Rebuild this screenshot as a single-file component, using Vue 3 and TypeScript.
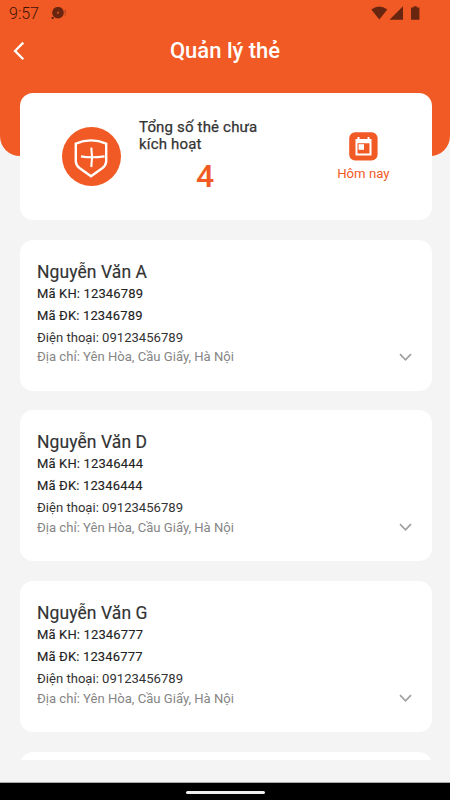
<script setup lang="ts">
interface Customer {
  name: string
  code: string
  phone: string
  address: string
}

const address = 'Yên Hòa, Cầu Giấy, Hà Nội'
const customers: Customer[] = [
  { name: 'Nguyễn Văn A', code: '12346789', phone: '09123456789', address },
  { name: 'Nguyễn Văn D', code: '12346444', phone: '09123456789', address },
  { name: 'Nguyễn Văn G', code: '12346777', phone: '09123456789', address },
]
</script>

<template>
  <div class="screen">
    <header class="header">
      <div class="status">
        <span class="time">9:57</span>
        <svg class="notice" width="16" height="14" viewBox="0 0 16 14">
          <circle cx="7" cy="5.7" r="5.8" fill="#682510" />
          <circle cx="7" cy="5.7" r="1.3" fill="#b9451c" />
          <circle cx="1.7" cy="10.9" r="1.2" fill="#682510" />
          <path d="M14.2 3v3.4M14.2 7.4v1.2" stroke="#a8431f" stroke-width="1.2" />
        </svg>
        <svg class="signals" width="50" height="16" viewBox="0 0 50 16">
          <path d="M1.3 3.4Q9.3 -2.6 17.3 3.4L9.3 13.6Z" fill="#682510" />
          <path d="M33 .3V13.8H19.5Z" fill="#682510" />
          <path d="M41 1.6h2.6V.2h3.2v1.4h2.6v12.2H41Z" fill="#682510" />
        </svg>
      </div>
      <div class="title-bar">
        <button class="back" aria-label="Quay lại">
          <svg width="14" height="20" viewBox="0 0 14 20">
            <path d="M11.3 1.6 3 9.9l8.3 8.3" fill="none" stroke="#fff" stroke-width="2.2" />
          </svg>
        </button>
        <h1>Quản lý thẻ</h1>
      </div>
    </header>

    <main class="content">
      <section class="summary">
        <div class="badge">
          <svg width="34" height="40" viewBox="0 0 34 40" fill="none" stroke="#fff">
            <path d="M1.8 4.6Q17 -1.8 32.2 4.6V22.6Q31.8 26.5 28.5 29L17 37.2 5.5 29Q2.2 26.5 1.8 22.6Z" stroke-width="2.4" />
            <path d="M17.3 8.6Q18.8 18 17.3 28M7 17.4Q17 19.2 30.6 17.4" stroke-width="2.1" />
          </svg>
        </div>
        <div class="total">
          <p>Tổng số thẻ chưa<br />kích hoạt</p>
          <strong>4</strong>
        </div>
        <div class="today">
          <svg width="29" height="29" viewBox="0 0 29 29">
            <rect x=".2" y=".2" width="28.4" height="28.2" rx="6" fill="#f15a24" />
            <path d="M6.5 7h2V5h2v2h8V5h2v2h2v16.5h-16ZM8.5 11.3V21.5h12V11.3Z" fill="#fff" fill-rule="evenodd" />
            <rect x="9.6" y="12.2" width="5.4" height="5.6" fill="#fff" />
          </svg>
          <span>Hôm nay</span>
        </div>
      </section>

      <div class="list">
        <article v-for="customer in customers" :key="customer.code" class="card">
          <h2>{{ customer.name }}</h2>
          <p class="code">Mã KH: {{ customer.code }}</p>
          <p class="code">Mã ĐK: {{ customer.code }}</p>
          <p class="phone">Điện thoại: {{ customer.phone }}</p>
          <div class="address">
            <span>Địa chỉ: {{ customer.address }}</span>
            <svg width="13" height="9" viewBox="0 0 13 9">
              <path d="M1 1.2 6.5 6.8 12 1.2" fill="none" stroke="#a0a0a0" stroke-width="1.7" />
            </svg>
          </div>
        </article>
        <article class="card"></article>
      </div>
    </main>

    <footer class="nav"><span></span></footer>
  </div>
</template>

<style>
body {
  margin: 0;
  overflow: hidden;
}
</style>

<style scoped>
.screen {
  width: 450px;
  height: 800px;
  display: flex;
  flex-direction: column;
  overflow: hidden;
  background: #f4f4f4;
  color: #333;
  font-family: Roboto, "Noto Sans", sans-serif;
}

h1,
h2,
p {
  margin: 0;
}

.header {
  flex: 0 0 156px;
  box-sizing: border-box;
  background: #f15a24;
  border-radius: 0 0 20px 20px;
}

.status {
  height: 28px;
  box-sizing: border-box;
  padding: 6px 30px 0 9px;
  display: flex;
  align-items: flex-start;
}

.time {
  width: 42px;
  font-size: 16px;
  line-height: 16px;
  font-weight: 300;
  color: #3d1308;
}

.notice {
  margin-top: 1px;
}

.signals {
  margin-left: auto;
}

.title-bar {
  height: 46px;
  padding: 0 12px;
  display: grid;
  grid-template-columns: 20px 1fr 20px;
  align-items: center;
}

.back {
  display: flex;
  padding: 0;
  border: 0;
  background: none;
}

h1 {
  color: #fff;
  font-size: 22px;
  line-height: 28px;
  font-weight: 500;
  text-align: center;
}

.content {
  height: 667px;
  flex: none;
  margin-top: -63px;
  padding: 0 18.5px 0 19.5px;
  overflow: hidden;
}

.summary {
  height: 127px;
  box-sizing: border-box;
  padding: 0 42px;
  display: flex;
  background: #fff;
  border-radius: 13px;
}

.badge {
  width: 59px;
  height: 59px;
  margin-top: 34px;
  display: flex;
  align-items: center;
  justify-content: center;
  background: #f15a24;
  border-radius: 50%;
}

.badge svg {
  margin-top: 4px;
}

.total {
  width: 132px;
  margin: 26px 0 0 18.5px;
}

.total p {
  font-size: 15px;
  line-height: 17px;
  letter-spacing: 0.17px;
  -webkit-text-stroke: 0.25px currentColor;
  white-space: nowrap;
}

.total strong {
  display: block;
  margin-top: 4px;
  font-size: 32px;
  line-height: 38px;
  font-weight: 500;
  text-align: center;
  color: #f15a24;
}

.today {
  margin: 39px 0 0 auto;
  display: flex;
  flex-direction: column;
  align-items: center;
  color: #f15a24;
  font-size: 13.2px;
  line-height: 18px;
}

.today span {
  margin-top: 4px;
}

.list {
  margin-top: 19.5px;
  display: flex;
  flex-direction: column;
  gap: 19.7px;
}

.card {
  height: 151px;
  flex: none;
  box-sizing: border-box;
  padding: 21px 20px 0 17.5px;
  background: #fff;
  border-radius: 13px;
}

h2 {
  font-size: 17.5px;
  line-height: 22px;
  font-weight: 400;
  letter-spacing: 0.08px;
  -webkit-text-stroke: 0.15px currentColor;
}

.code {
  font-size: 13px;
  line-height: 22px;
  letter-spacing: 0.15px;
  -webkit-text-stroke: 0.12px currentColor;
  color: #222;
}

.phone {
  font-size: 13.1px;
  line-height: 21.8px;
}

.address {
  display: flex;
  align-items: center;
  justify-content: space-between;
  font-size: 13.1px;
  line-height: 18px;
  color: #858585;
}

.nav {
  height: 18px;
  margin-top: auto;
  box-sizing: border-box;
  border-top: 1px solid #a9a9a9;
  display: flex;
  align-items: center;
  justify-content: center;
  background: #000;
}

.nav span {
  width: 79px;
  height: 3px;
  margin-top: 1px;
  border-radius: 2px;
  background: #eee;
}
</style>
